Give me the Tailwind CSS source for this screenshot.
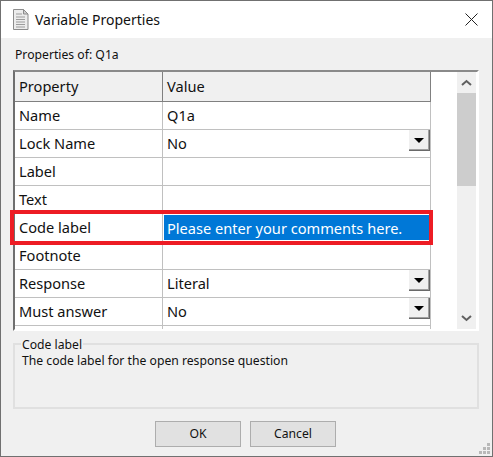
<!DOCTYPE html>
<html lang="en">
<head>
  <meta charset="UTF-8" />
  <title>Variable Properties</title>
  <script src="https://cdn.jsdelivr.net/npm/@tailwindcss/browser@4"></script>
</head>
<body class="bg-[#f0f0f0]">
  <div class="relative w-[493px] h-[457px] flex flex-col border border-[#707070] bg-[#f0f0f0] font-['Noto_Sans',sans-serif] text-[#111] overflow-hidden">

    <!-- title bar -->
    <div class="h-[37px] bg-white flex items-center shrink-0">
      <svg class="ml-[11px] w-[17px] h-[21px]" viewBox="0 0 17 21">
        <path d="M1.5.5h10l4.500 4.500v15.500h-14.500z" fill="#ececec" stroke="#8c8c8c"/>
        <path d="M11.500.5v4.500h4.500z" fill="#d0d0d0" stroke="#8c8c8c"/>
        <path d="M4 5h6M4 8h9M4 10.500h9M4 13h9M4 15.500h9M4 18h9" stroke="#9c9c9c"/>
      </svg>
      <span class="ml-[6px] text-[14px] leading-none">Variable Properties</span>
      <svg class="ml-auto mr-[14px] w-[13px] h-[13px]" viewBox="0 0 13 13">
        <path d="M.5.500l12 12M12.500.500l-12 12" stroke="#222" fill="none"/>
      </svg>
    </div>

    <div class="flex-1 flex flex-col px-3">
      <div class="h-[32px] pt-[8px] text-[12.2px] leading-[17px] pl-[2px]">Properties of: Q1a</div>

      <!-- property grid -->
      <div class="relative flex w-[466px] h-[261px] border-t-2 border-l-2 border-t-[#8a8a8a] border-l-[#6f6f6f] border-r-2 border-b-2 border-r-white border-b-white">
        <div class="w-[416px] text-[14.6px] leading-[27px] bg-white">
          <div class="flex h-[30px] bg-[#f0f0f0] border-b border-[#808080] items-center">
            <div class="w-[148px] h-full pl-[4px] flex items-center border-r border-[#808080]">Property</div>
            <div class="flex-1 h-full pl-[4px] flex items-center border-r border-[#808080]">Value</div>
          </div>
          <div class="flex h-[28px] border-b border-[#c0c0c0]">
            <div class="w-[148px] pl-[4px] border-r border-[#c0c0c0]">Name</div>
            <div class="flex-1 pl-[4px] border-r border-[#c0c0c0]">Q1a</div>
          </div>
          <div class="flex h-[28px] border-b border-[#c0c0c0]">
            <div class="w-[148px] pl-[4px] border-r border-[#c0c0c0]">Lock Name</div>
            <div class="flex-1 pl-[4px] border-r border-[#c0c0c0] flex justify-between items-start">
              <span>No</span>
              <div class="w-[21px] h-[21px] bg-[#f0f0f0] border-r border-b border-[#696969] shadow-[inset_-1px_-1px_0_#a0a0a0] flex items-center justify-center">
                <div class="w-0 h-0 border-l-[5px] border-r-[5px] border-t-[5px] border-l-transparent border-r-transparent border-t-black"></div>
              </div>
            </div>
          </div>
          <div class="flex h-[28px] border-b border-[#c0c0c0]">
            <div class="w-[148px] pl-[4px] border-r border-[#c0c0c0]">Label</div>
            <div class="flex-1 border-r border-[#c0c0c0]"></div>
          </div>
          <div class="flex h-[28px] border-b border-[#c0c0c0]">
            <div class="w-[148px] pl-[4px] border-r border-[#c0c0c0]">Text</div>
            <div class="flex-1 border-r border-[#c0c0c0]"></div>
          </div>
          <div class="flex h-[28px] border-b border-[#c0c0c0]">
            <div class="w-[148px] pl-[4px] border-r border-[#c0c0c0]">Code label</div>
            <div class="flex-1 pl-[3px] ml-[1px] mr-[1px] mt-[1px] mb-[1px] leading-[26px] bg-[#0078d7] text-white">Please enter your comments here.</div>
          </div>
          <div class="flex h-[28px] border-b border-[#c0c0c0]">
            <div class="w-[148px] pl-[4px] border-r border-[#c0c0c0]">Footnote</div>
            <div class="flex-1 border-r border-[#c0c0c0]"></div>
          </div>
          <div class="flex h-[28px] border-b border-[#c0c0c0]">
            <div class="w-[148px] pl-[4px] border-r border-[#c0c0c0]">Response</div>
            <div class="flex-1 pl-[4px] border-r border-[#c0c0c0] flex justify-between items-start">
              <span>Literal</span>
              <div class="w-[21px] h-[21px] bg-[#f0f0f0] border-r border-b border-[#696969] shadow-[inset_-1px_-1px_0_#a0a0a0] flex items-center justify-center">
                <div class="w-0 h-0 border-l-[5px] border-r-[5px] border-t-[5px] border-l-transparent border-r-transparent border-t-black"></div>
              </div>
            </div>
          </div>
          <div class="flex h-[28px] border-b border-[#c0c0c0]">
            <div class="w-[148px] pl-[4px] border-r border-[#c0c0c0]">Must answer</div>
            <div class="flex-1 pl-[4px] border-r border-[#c0c0c0] flex justify-between items-start">
              <span>No</span>
              <div class="w-[21px] h-[21px] bg-[#f0f0f0] border-r border-b border-[#696969] shadow-[inset_-1px_-1px_0_#a0a0a0] flex items-center justify-center">
                <div class="w-0 h-0 border-l-[5px] border-r-[5px] border-t-[5px] border-l-transparent border-r-transparent border-t-black"></div>
              </div>
            </div>
          </div>
          <div class="flex h-[3px]">
            <div class="w-[148px] border-r border-[#c0c0c0]"></div>
            <div class="flex-1 border-r border-[#c0c0c0]"></div>
          </div>
        </div>
        <div class="flex-1 bg-white flex justify-end">
          <div class="w-[19px] mr-[1px] bg-[#f0f0f0] flex flex-col items-center">
            <svg class="w-[19px] h-[21px]" viewBox="0 0 19 21"><path d="M5 13l4.500-4 4.500 4" fill="none" stroke="#606060" stroke-width="2"/></svg>
            <div class="w-[19px] h-[93px] bg-[#cdcdcd]"></div>
            <div class="flex-1"></div>
            <svg class="w-[19px] h-[21px]" viewBox="0 0 19 21"><path d="M5 8l4.500 4 4.500-4" fill="none" stroke="#606060" stroke-width="2"/></svg>
          </div>
        </div>
        <!-- highlight around the edited cell -->
        <div class="absolute left-[-5px] top-[138px] w-[423px] h-[35px] border-4 border-[#ed1c24]"></div>
      </div>

      <!-- description -->
      <div class="relative mt-[12px] w-[466px] h-[66px] border-2 border-[#e0e0e0] text-[12.2px] leading-[16px] pl-[7px] pt-[8px]">
        <span class="absolute left-[6px] top-[-8px] leading-[15px] bg-[#f0f0f0] px-[1px]">Code label</span>
        The code label for the open response question
      </div>

      <div class="flex justify-center gap-[9px] mt-[12px] pr-[2px]">
        <div class="w-[86px] h-[26px] bg-[#e1e1e1] border border-[#adadad] text-[12.2px] flex items-center justify-center">OK</div>
        <div class="w-[86px] h-[26px] bg-[#e1e1e1] border border-[#adadad] text-[12.2px] flex items-center justify-center">Cancel</div>
      </div>
    </div>

    <!-- resize grip -->
    <svg class="absolute right-[1px] bottom-[1px] w-[12px] h-[12px]" viewBox="0 0 12 12" fill="#b8b8b8">
      <path d="M8 0h3v3h-3zM4 4h3v3h-3zM8 4h3v3h-3zM0 8h3v3h-3zM4 8h3v3h-3zM8 8h3v3h-3z"/>
    </svg>
  </div>
</body>
</html>
